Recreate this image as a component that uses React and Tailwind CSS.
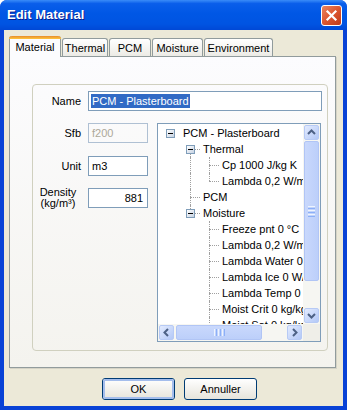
import React from "react";

const rows = [
  { t: "PCM - Plasterboard", lvl: 0, box: true, v: [] },
  { t: "Thermal", lvl: 1, box: true, v: [[1, "b"]] },
  { t: "Cp 1000 J/kg K", lvl: 2, v: [[1, "f"], [2, "f"]] },
  { t: "Lambda 0,2 W/m K", lvl: 2, v: [[1, "f"], [2, "t"]] },
  { t: "PCM", lvl: 1, v: [[1, "f"]] },
  { t: "Moisture", lvl: 1, box: true, v: [[1, "t"]] },
  { t: "Freeze pnt 0 °C", lvl: 2, v: [[2, "f"]] },
  { t: "Lambda 0,2 W/m K", lvl: 2, v: [[2, "f"]] },
  { t: "Lambda Water 0 W/m K", lvl: 2, v: [[2, "f"]] },
  { t: "Lambda Ice 0 W/m K", lvl: 2, v: [[2, "f"]] },
  { t: "Lambda Temp 0 W/m K", lvl: 2, v: [[2, "f"]] },
  { t: "Moist Crit 0 kg/kg", lvl: 2, v: [[2, "f"]] },
  { t: "Moist Sat 0 kg/kg", lvl: 2, v: [[2, "f"]] },
];

const boxLeft = (l) => 8 + 19 * l + (l > 0 ? 1 : 0);

function TreeRow({ row }) {
  const cx = boxLeft(row.lvl) + 4;
  return (
    <div className="relative h-[16px] whitespace-nowrap">
      {row.v.map(([l, kind], i) => (
        <span
          key={i}
          className={
            "absolute w-0 border-l border-dotted border-[#A0A0A0] " +
            (kind === "f" ? "top-0 h-[16px]" : kind === "t" ? "top-0 h-[8px]" : "top-[8px] h-[8px]")
          }
          style={{ left: boxLeft(l) + 4 }}
        />
      ))}
      {row.lvl > 0 && (
        <span
          className="absolute top-[8px] h-0 w-[10px] border-t border-dotted border-[#A0A0A0]"
          style={{ left: cx }}
        />
      )}
      {row.box && (
        <span
          className="absolute top-[4px] w-[9px] h-[9px] border border-[#7F9DB9] bg-gradient-to-br from-white to-[#C6D2E2] flex items-center justify-center"
          style={{ left: boxLeft(row.lvl) }}
        >
          <span className="w-[5px] h-[1px] bg-black" />
        </span>
      )}
      <span
        className="absolute top-0 leading-[16px] text-black"
        style={{ left: 25 + 19 * row.lvl + (row.lvl > 0 ? 1 : 0) }}
      >
        {row.t}
      </span>
    </div>
  );
}

const arrowPaths = {
  up: "M4 9 L7.5 5.5 L11 9",
  down: "M4 6 L7.5 9.5 L11 6",
  left: "M9 4 L5.5 7.5 L9 11",
  right: "M6 4 L9.5 7.5 L6 11",
};

function ArrowBtn({ dir }) {
  return (
    <div className="w-[15px] h-[15px] shrink-0 rounded-[2px] border border-[#B7CAF5] bg-gradient-to-br from-[#E3EBFE] to-[#B3C8F7] flex items-center justify-center">
      <svg width="13" height="13" viewBox="1 1 13 13">
        <path d={arrowPaths[dir]} stroke="#4D6185" strokeWidth="2" fill="none" />
      </svg>
    </div>
  );
}

function Tab({ label, selected, w }) {
  if (selected) {
    return (
      <div
        className="relative z-10 -mb-px h-[21px] rounded-t-[3px] border-x border-[#919B9C] bg-[#FCFCFE] flex flex-col"
        style={{ width: w }}
      >
        <div className="h-[3px] -mx-px rounded-t-[3px] bg-gradient-to-b from-[#E68B2C] to-[#FFC73C]" />
        <div className="flex-1 flex items-center justify-center pb-[1px]">{label}</div>
      </div>
    );
  }
  return (
    <div
      className="h-[18px] rounded-t-[3px] border border-b-0 border-[#919B9C] bg-gradient-to-b from-white to-[#ECEBE5] flex items-center justify-center pt-[2px]"
      style={{ width: w }}
    >
      {label}
    </div>
  );
}

function Btn({ children, def }) {
  return (
    <div className="w-[73px] h-[22px] rounded-[3px] border border-[#003C74] bg-gradient-to-b from-white to-[#E6E4DB] flex items-center justify-center">
      <div
        className={
          "w-full h-full rounded-[2px] flex items-center justify-center " +
          (def ? "border-2 border-[#A4BDEC]" : "")
        }
      >
        {children}
      </div>
    </div>
  );
}

export default function App() {
  return (
    <div className="w-[347px] h-[410px] bg-white font-['Liberation_Sans',Arial,sans-serif] text-[11px] text-black">
      <div className="w-full h-full rounded-t-[7px] bg-[#0842D6] flex flex-col overflow-hidden">
        {/* title bar */}
        <div className="h-[30px] shrink-0 flex items-center justify-between pl-[7px] pr-[5px] bg-[linear-gradient(to_bottom,#3A8CF8_0%,#0A5EEA_12%,#0057E5_45%,#0054E2_80%,#0048D6_100%)]">
          <span className="text-white font-bold text-[13px] [text-shadow:1px_1px_0_#0A1C8C]">Edit Material</span>
          <div className="w-[21px] h-[21px] rounded-[3px] border border-white bg-gradient-to-br from-[#E9845F] via-[#DC5630] to-[#C13A17] flex items-center justify-center">
            <svg width="13" height="13" viewBox="0 0 13 13">
              <path d="M2.5 2.5 L10.5 10.5 M10.5 2.5 L2.5 10.5" stroke="white" strokeWidth="2.2" strokeLinecap="square" />
            </svg>
          </div>
        </div>

        {/* body */}
        <div className="flex-1 mx-[4px] mb-[4px] bg-[#ECE9D8] flex flex-col pt-[6px]">
          <div className="ml-[5px] mr-[7px] flex items-end gap-[1px]">
            <Tab label="Material" selected w={52} />
            <Tab label="Thermal" w={46} />
            <Tab label="PCM" w={42} />
            <Tab label="Moisture" w={51} />
            <Tab label="Environment" w={69} />
          </div>

          <div className="ml-[5px] mr-[7px] h-[312px] border border-[#919B9C] bg-gradient-to-b from-[#FCFCFE] to-[#F4F3EE] shadow-[1px_1px_0_#D5D3C6] pt-[27px]">
            {/* group box */}
            <div className="ml-[22px] mr-[7px] h-[267px] border border-[#D0D0BF] rounded-[4px] pt-[6px] pr-[5px]">
              <div className="flex items-center h-[20px]">
                <div className="w-[48px] text-right">Name</div>
                <div className="ml-[7px] flex-1 h-[20px] border border-[#7F9DB9] bg-white flex items-center pl-[2px]">
                  <span className="bg-[#316AC5] text-white leading-[14px] px-[1px]">PCM - Plasterboard</span>
                </div>
              </div>

              <div className="mt-[12px] flex">
                <div className="w-[115px] flex flex-col">
                  <div className="flex items-center h-[20px]">
                    <div className="w-[48px] text-right">Sfb</div>
                    <div className="ml-[7px] w-[60px] h-[20px] border border-[#AFC0D3] flex items-center pl-[3px] text-[#ACA899]">f200</div>
                  </div>
                  <div className="flex items-center h-[20px] mt-[13px]">
                    <div className="w-[48px] text-right">Unit</div>
                    <div className="ml-[7px] w-[60px] h-[20px] border border-[#7F9DB9] bg-white flex items-center pl-[3px]">m3</div>
                  </div>
                  <div className="flex items-center h-[20px] mt-[12px]">
                    <div className="w-[48px] flex flex-col items-center leading-[11px] pl-[2px]">
                      <span>Density</span>
                      <span>(kg/m³)</span>
                    </div>
                    <div className="ml-[7px] w-[60px] h-[20px] border border-[#7F9DB9] bg-white flex items-center justify-end pr-[4px]">881</div>
                  </div>
                </div>

                {/* tree view */}
                <div className="ml-[9px] w-[164px] h-[219px] border border-[#7F9DB9] bg-white flex flex-col">
                  <div className="flex h-[200px]">
                    <div className="w-[145px] h-[200px] overflow-hidden pt-[1px]">
                      {rows.map((r, i) => (
                        <TreeRow key={i} row={r} />
                      ))}
                    </div>
                    <div className="w-[17px] h-[200px] bg-[#F6F6F2] flex flex-col items-center p-[1px]">
                      <ArrowBtn dir="up" />
                      <div className="mt-[1px] w-[15px] h-[140px] rounded-[2px] border border-[#B1C5F5] bg-gradient-to-r from-[#C9D8FC] to-[#BCCFFA] flex flex-col items-center justify-center gap-[1px]">
                        <div className="w-[7px] h-[1px] bg-[#EEF4FE]" />
                        <div className="w-[7px] h-[1px] bg-[#8CB0F8]" />
                        <div className="w-[7px] h-[1px] bg-[#EEF4FE]" />
                        <div className="w-[7px] h-[1px] bg-[#8CB0F8]" />
                        <div className="w-[7px] h-[1px] bg-[#EEF4FE]" />
                        <div className="w-[7px] h-[1px] bg-[#8CB0F8]" />
                      </div>
                      <div className="flex-1" />
                      <ArrowBtn dir="down" />
                    </div>
                  </div>
                  <div className="flex h-[17px]">
                    <div className="w-[145px] h-[17px] bg-[#F6F6F2] flex items-center p-[1px]">
                      <ArrowBtn dir="left" />
                      <div className="ml-[2px] w-[86px] h-[15px] rounded-[2px] border border-[#B1C5F5] bg-gradient-to-b from-[#C9D8FC] to-[#BCCFFA] flex items-center justify-center gap-[1px]">
                        <div className="w-[1px] h-[7px] bg-[#EEF4FE]" />
                        <div className="w-[1px] h-[7px] bg-[#8CB0F8]" />
                        <div className="w-[1px] h-[7px] bg-[#EEF4FE]" />
                        <div className="w-[1px] h-[7px] bg-[#8CB0F8]" />
                        <div className="w-[1px] h-[7px] bg-[#EEF4FE]" />
                        <div className="w-[1px] h-[7px] bg-[#8CB0F8]" />
                      </div>
                      <div className="flex-1" />
                      <ArrowBtn dir="right" />
                    </div>
                    <div className="w-[17px] h-[17px] bg-[#EFEEE8]" />
                  </div>
                </div>
              </div>
            </div>
          </div>

          {/* buttons */}
          <div className="mt-[10px] pl-[98px] flex gap-[9px]">
            <Btn def>OK</Btn>
            <Btn>Annuller</Btn>
          </div>
        </div>
      </div>
    </div>
  );
}
